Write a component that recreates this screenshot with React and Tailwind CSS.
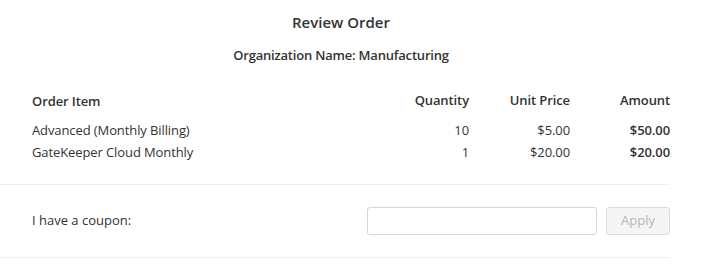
import React from "react";

const items = [
	{ name: "Advanced (Monthly Billing)", qty: 10, price: "$5.00", amount: "$50.00" },
	{ name: "GateKeeper Cloud Monthly", qty: 1, price: "$20.00", amount: "$20.00" },
];

export default function App() {
	return (
		<div className="w-[703px] h-[273px] bg-white text-[#333] font-['Open_Sans',sans-serif] text-[13px]">
			<div className="w-[670px]">
				{/* Header */}
				<div className="w-[682px] pt-[11px] text-center">
					<h2 className="text-[15px] font-semibold leading-[22px]">Review Order</h2>
					<p className="mt-[11px] font-semibold leading-[22px] tracking-[-0.2px]">Organization Name: Manufacturing</p>
				</div>

				{/* Items */}
				<table className="ml-[32px] mt-[24px] w-[638px] tracking-[-0.1px]">
					<thead>
						<tr>
							<th className="text-left font-semibold h-[22px] leading-[22px]">Order Item</th>
							<th className="text-right font-semibold w-[110px]">Quantity</th>
							<th className="text-right font-semibold w-[101px]">Unit Price</th>
							<th className="text-right font-semibold w-[100px]">Amount</th>
						</tr>
					</thead>
					<tbody>
						<tr><td className="h-[7px]" colSpan={4}></td></tr>
						{items.map((it) => (
							<tr key={it.name} className="leading-[22px]">
								<td>{it.name}</td>
								<td className="text-right">{it.qty}</td>
								<td className="text-right">{it.price}</td>
								<td className="text-right font-semibold">{it.amount}</td>
							</tr>
						))}
					</tbody>
				</table>

				{/* Coupon */}
				<div className="mt-[21px] border-t border-b border-[#eee] h-[74px] flex items-center pl-[32px]">
					<span className="flex-1">I have a coupon:</span>
					<input type="text" className="w-[230px] h-[28px] border border-[#d5d5d5] rounded-[3px] outline-none" />
					<button className="ml-[9px] w-[64px] h-[28px] bg-[#f5f5f5] border border-[#dcdcdc] rounded-[3px] text-[#b5b5b5]">
						Apply
					</button>
				</div>
			</div>
		</div>
	);
}
